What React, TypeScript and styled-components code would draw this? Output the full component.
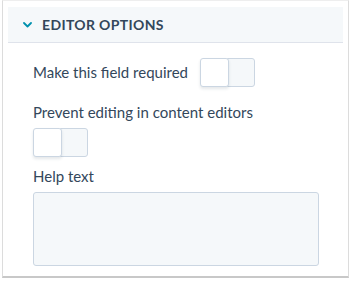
import styled, { createGlobalStyle } from "styled-components";

const Global = createGlobalStyle`
  html, body {
    margin: 0;
    padding: 0;
    background: #ffffff;
  }
  body {
    font-family: Lato, "Open Sans", sans-serif;
    color: #33475b;
  }
`

const Panel = styled.section`
  box-sizing: border-box;
  margin-left: 2px;
  width: 347px;
  height: 278px;
  border: 1px solid #dcdcdc;
  border-top-color: #eeeeee;
  border-bottom: 2px solid #c8c8c8;
  background: #ffffff;
  padding: 6px 5px 0;
  display: flex;
  flex-direction: column;
`

const Header = styled.div`
  height: 38px;
  display: flex;
  align-items: center;
  gap: 10px;
  padding-left: 15px;
  background: #f5f8fa;
  border-bottom: 1px solid #dfe3eb;
`

const Title = styled.h3`
  margin: 0;
  font-size: 14px;
  font-weight: 700;
  letter-spacing: 0.35px;
  color: #33475b;
`

const Body = styled.div`
  display: flex;
  flex-direction: column;
  padding: 15px 0 0 25px;
`

const Row = styled.div<{ $inline?: boolean }>`
  display: flex;
  flex-direction: ${(p) => (p.$inline ? "row" : "column")};
  align-items: ${(p) => (p.$inline ? "center" : "flex-start")};
  gap: ${(p) => (p.$inline ? "12px" : "6px")};
  margin-bottom: ${(p) => (p.$inline ? "16px" : "10px")};
`

const Label = styled.label`
  font-size: 15px;
  line-height: 19px;
  color: #33475b;
`

const Toggle = styled.button`
  display: flex;
  width: 56px;
  height: 29px;
  padding: 0;
  border: none;
  background: none;
  cursor: pointer;
`

const Knob = styled.span`
  box-sizing: border-box;
  width: 29px;
  height: 29px;
  background: #ffffff;
  border: 1px solid #cbd6e2;
  border-radius: 3px;
  box-shadow: 0 2px 3px rgba(45, 62, 80, 0.12);
  position: relative;
  z-index: 1;
`

const Track = styled.span`
  box-sizing: border-box;
  width: 28px;
  height: 29px;
  margin-left: -2px;
  background: #f5f8fa;
  border: 1px solid #cbd6e2;
  border-radius: 0 3px 3px 0;
`

const HelpArea = styled.textarea`
  box-sizing: border-box;
  width: 286px;
  height: 74px;
  resize: none;
  background: #f5f8fa;
  border: 1px solid #cbd6e2;
  border-radius: 3px;
  font-family: inherit;
  font-size: 14px;
`

function Switch() {
  return (
    <Toggle type="button" role="switch" aria-checked={false}>
      <Knob />
      <Track />
    </Toggle>
  )
}

export default function App() {
  return (
    <>
      <Global />
      <Panel>
        <Header>
          <svg width="9" height="6" viewBox="0 0 9 6">
            <path d="M1 1l3.5 3.5L8 1" fill="none" stroke="#0091ae" strokeWidth="1.8" strokeLinecap="round" strokeLinejoin="round" />
          </svg>
          <Title>EDITOR OPTIONS</Title>
        </Header>
        <Body>
          <Row $inline>
            <Label>Make this field required</Label>
            <Switch />
          </Row>
          <Row>
            <Label>Prevent editing in content editors</Label>
            <Switch />
          </Row>
          <Row>
            <Label>Help text</Label>
            <HelpArea />
          </Row>
        </Body>
      </Panel>
    </>
  )
}
